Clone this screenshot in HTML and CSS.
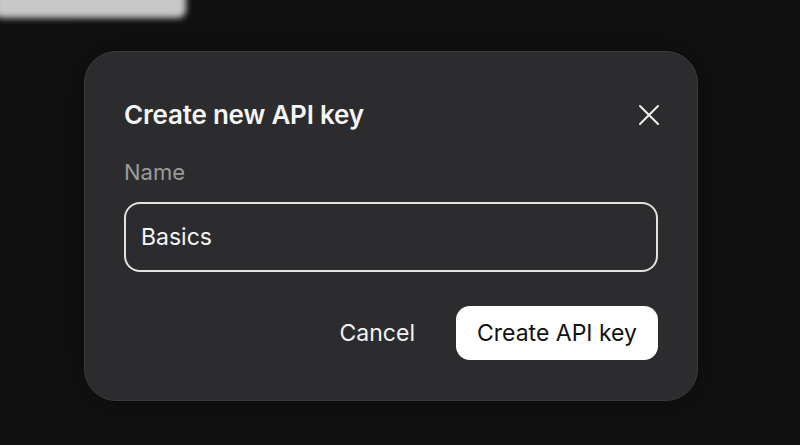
FILE: index.html
```html
<!DOCTYPE html>
<html lang="en">
<head>
<meta charset="utf-8">
<title>Create new API key</title>
<link rel="stylesheet" href="styles.css">
</head>
<body>
  <div class="backdrop-page">
    <div class="ghost-button">
      <span class="ghost-line"></span>
    </div>
  </div>
  <div class="dialog" role="dialog" aria-labelledby="dlg-title">
    <div class="dialog-header">
      <h2 id="dlg-title" class="dialog-title">Create new API key</h2>
      <button class="close-btn" aria-label="Close">
        <svg width="22" height="22" viewBox="0 0 22 22" fill="none" stroke="currentColor" stroke-width="2" stroke-linecap="round">
          <path d="M2 2 L20 20 M20 2 L2 20"/>
        </svg>
      </button>
    </div>
    <label class="field-label" for="name">Name</label>
    <div class="input-box">
      <span class="input-value">Basics</span>
    </div>
    <div class="actions">
      <button class="btn btn-ghost">Cancel</button>
      <button class="btn btn-primary">Create API key</button>
    </div>
  </div>
</body>
</html>
```
FILE: styles.css
```css
html, body {
  margin: 0;
  padding: 0;
}
body {
  width: 800px;
  height: 445px;
  overflow: hidden;
  background: #111111;
  font-family: Inter, "Noto Sans", sans-serif;
  color: #ffffff;
}
.backdrop-page {
  height: 24px;
  overflow: hidden;
}
.ghost-button {
  width: 192px;
  height: 42px;
  margin-top: -24px;
  margin-left: -6px;
  background: #c8c8c8;
  border-radius: 8px;
  box-sizing: border-box;
  padding: 8px 0 0 12px;
  filter: blur(3px);
}
.ghost-line {
  display: block;
  width: 156px;
  height: 6px;
  background: #aaaaaa;
  border-radius: 3px;
}
.dialog {
  width: 614px;
  height: 350px;
  box-sizing: border-box;
  margin: 27px 0 0 84px;
  padding: 43px 39px 40px 39px;
  background: #2c2c2e;
  border: 1px solid #3b3b3d;
  border-radius: 32px;
  box-shadow: 0 0 40px rgba(0, 0, 0, 0.35);
  display: flex;
  flex-direction: column;
}
.dialog-header {
  display: flex;
  align-items: center;
  justify-content: space-between;
  height: 40px;
}
.dialog-title {
  margin: 0;
  font-size: 26px;
  font-weight: 600;
  color: #f5f5f5;
  letter-spacing: -0.2px;
}
.close-btn {
  width: 22px;
  height: 22px;
  margin-right: -2px;
  padding: 0;
  border: none;
  background: none;
  color: #f0f0f0;
  display: flex;
  align-items: center;
  justify-content: center;
}
.field-label {
  margin-top: 25px;
  font-size: 22px;
  color: #9b9b9d;
  line-height: 27px;
}
.input-box {
  margin-top: 16px;
  height: 71px;
  box-sizing: border-box;
  border: 2px solid #e2e2e2;
  border-radius: 16px;
  padding: 0 15px;
  display: flex;
  align-items: center;
}
.input-value {
  font-size: 23px;
  color: #f5f5f5;
}
.actions {
  margin-top: 34px;
  display: flex;
  justify-content: flex-end;
  gap: 21px;
}
.btn {
  height: 54px;
  border: none;
  border-radius: 14px;
  padding: 0 20px;
  font-family: inherit;
  font-size: 23px;
  cursor: pointer;
}
.btn-ghost {
  background: transparent;
  color: #f2f2f2;
}
.btn-primary {
  background: #ffffff;
  color: #111111;
  width: 202px;
}
```
